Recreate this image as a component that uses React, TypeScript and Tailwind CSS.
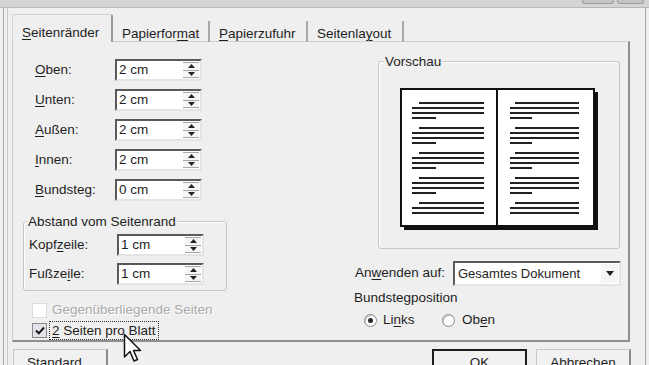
import React from "react"

const ink = "text-[#1e1e1e]"

function U({ children }: { children: React.ReactNode }) {
  return <span className="underline underline-offset-[2px] decoration-[1px]">{children}</span>
}

function Tri({ up }: { up?: boolean }) {
  return (
    <svg width="7" height="4" viewBox="0 0 7 4">
      <polygon points={up ? "3.5,0 7,4 0,4" : "0,0 7,0 3.5,4"} fill="#222" />
    </svg>
  )
}

function SpinField({ value }: { value: string }) {
  return (
    <div className="flex h-[22px] w-[87px] bg-white border-2 border-t-[#5a5a5a] border-l-[#5a5a5a] border-r-[#e4e4e4] border-b-[#e4e4e4]">
      <div className="flex-1 flex items-center pl-[2px] leading-none">{value}</div>
      <div className="w-[16px] mr-[1px] my-[1px] flex flex-col">
        <div className="flex-1 flex items-center justify-center bg-[#f6f6f6] border-t border-b border-[#a8a8a8]">
          <Tri up />
        </div>
        <div className="flex-1 flex items-center justify-center bg-[#f6f6f6] border-b border-[#a8a8a8]">
          <Tri />
        </div>
      </div>
    </div>
  )
}

function FieldRow({ label, value, labelW }: { label: React.ReactNode; value: string; labelW: string }) {
  return (
    <div className="flex items-center h-[22px]">
      <div className={labelW}>{label}</div>
      <SpinField value={value} />
    </div>
  )
}

function Radio({ checked }: { checked?: boolean }) {
  return (
    <div className="w-[13px] h-[13px] rounded-full border border-[#8a8a8a] bg-white flex items-center justify-center shadow-[inset_1px_1px_0_#c8c8c8]">
      {checked && <div className="w-[5px] h-[5px] rounded-full bg-[#2a2a2a]" />}
    </div>
  )
}

function Book() {
  const left = [15, 40, 65, 90, 115]
  const line = (x1: number, x2: number, y: number, k: string) => (
    <line key={k} x1={x1} x2={x2} y1={y} y2={y} stroke="#222" strokeWidth="2" />
  )
  return (
    <svg width="199" height="143" viewBox="0 0 199 143">
      <rect x="4" y="4" width="194" height="138" fill="#111" />
      <rect x="1" y="1" width="193" height="137" fill="#fff" stroke="#111" strokeWidth="2" />
      <line x1="97" y1="1" x2="97" y2="138" stroke="#111" strokeWidth="2" />
      {left.map((y, i) => (
        <g key={i}>
          {line(19, 84, y, "a")}
          {line(12, 84, y + 5, "b")}
          {line(12, 84, y + 10, "c")}
          {i < 4 && line(12, 36, y + 15, "d")}
          {line(115, 179, y, "e")}
          {line(110, 179, y + 5, "f")}
          {line(110, 179, y + 10, "g")}
          {i < 4 && line(110, 132, y + 15, "h")}
        </g>
      ))}
    </svg>
  )
}

function Cursor() {
  return (
    <svg className="absolute left-[123px] top-[333px]" width="20" height="32" viewBox="0 0 20 32">
      <path d="M1.5 1.5 L1.5 24 L7 18.5 L11 28 L14.5 26.5 L10.5 17.5 L17.5 17.5 Z" fill="#fff" stroke="#111" strokeWidth="1.5" strokeLinejoin="round" />
    </svg>
  )
}

export default function App() {
  return (
    <div className={`relative w-[649px] h-[365px] overflow-hidden bg-[#efefef] font-['Liberation_Sans',Arial,sans-serif] text-[13.5px] ${ink}`}>
      {/* title bar remnant */}
      <div className="h-[8px] bg-[#d4d4d4] border-b border-[#b8b8b8] flex justify-end gap-[3px] pr-[5px]">
        <div className="w-[32px] h-[4px] bg-[#c4c4c4] border border-t-0 border-[#9c9c9c] rounded-b-[3px]" />
        <div className="w-[27px] h-[4px] bg-[#c4c4c4] border border-t-0 border-[#9c9c9c] rounded-b-[3px]" />
      </div>

      <div className="mx-[3px] h-[357px] border-x border-[#a9a9a9]">
        <div className="ml-[3px] h-full border-l border-[#c9c9c9] pt-[6px]">
          {/* tabs */}
          <div className="flex items-end h-[28px] ml-[4px] relative z-10">
            <div className="w-[101px] h-[28px] bg-[#efefef] border-t border-l border-[#d2d2d2] border-r-2 border-r-[#9a9a9a] rounded-t-[2px] pl-[9px] pt-[11px] leading-none">
              <U>S</U>eitenränder
            </div>
            <div className="w-[97px] h-[21px] border-r-2 border-[#a8a8a8] pl-[9px] pt-[6px] leading-none">
              Papierfor<U>m</U>at
            </div>
            <div className="w-[98px] h-[21px] border-r-2 border-[#a8a8a8] pl-[9px] pt-[6px] leading-none">
              <U>P</U>apierzufuhr
            </div>
            <div className="w-[96px] h-[21px] border-r-2 border-[#a8a8a8] pl-[9px] pt-[6px] leading-none">
              Seitenla<U>y</U>out
            </div>
          </div>

          {/* panel */}
          <div className="ml-[4px] -mt-px w-[618px] h-[301px] border-t border-l border-[#cdcdcd] border-r-2 border-b-2 border-r-[#8e8e8e] border-b-[#8e8e8e] flex">
            {/* left column */}
            <div className="w-[337px] pt-[17px]">
              <div className="ml-[22px] flex flex-col gap-[8px]">
                <FieldRow labelW="w-[80px]" label={<><U>O</U>ben:</>} value="2 cm" />
                <FieldRow labelW="w-[80px]" label={<><U>U</U>nten:</>} value="2 cm" />
                <FieldRow labelW="w-[80px]" label={<><U>A</U>ußen:</>} value="2 cm" />
                <FieldRow labelW="w-[80px]" label={<><U>I</U>nnen:</>} value="2 cm" />
                <FieldRow labelW="w-[80px]" label={<><U>B</U>undsteg:</>} value="0 cm" />
              </div>

              <div className="ml-[10px] mt-[20px] w-[204px] h-[70px] border border-[#c6c6c6] rounded-[3px] shadow-[inset_1px_1px_0_#fff]">
                <div className="-mt-[8px] ml-[3px] px-[1px] w-fit h-[15px] leading-[15px] bg-[#efefef]">Abstand vom Seitenrand</div>
                <div className="ml-[5px] mt-[5px] flex flex-col gap-[7px]">
                  <FieldRow labelW="w-[88px]" label={<>Kopf<U>z</U>eile:</>} value="1 cm" />
                  <FieldRow labelW="w-[88px]" label={<>Fußze<U>i</U>le:</>} value="1 cm" />
                </div>
              </div>

              <div className="ml-[19px] mt-[11px] flex items-center h-[16px] gap-[5px]">
                <div className="w-[15px] h-[15px] bg-white border border-[#dcdcdc]" />
                <span className="text-[#a9a9a9] [text-shadow:1px_1px_0_#fff]">Gegenüberliegende Seiten</span>
              </div>
              <div className="ml-[19px] mt-[3px] flex items-center h-[19px] gap-[2px]">
                <div className="w-[15px] h-[15px] bg-[#e2e4ea] border border-[#8a8a8a] flex items-center justify-center">
                  <svg width="10" height="9" viewBox="0 0 10 9">
                    <path d="M1 4.5 L3.8 7.3 L9 1.5" fill="none" stroke="#1a1a1a" strokeWidth="2" />
                  </svg>
                </div>
                <span className="border border-dotted border-[#333] px-[2px] h-[19px] leading-[17px]">
                  <U>2</U> Seiten pro Blatt
                </span>
              </div>
            </div>

            {/* right column */}
            <div className="flex-1 pt-[19px]">
              <div className="ml-[28px] w-[242px] h-[188px] border border-[#c6c6c6] rounded-[3px] shadow-[inset_1px_1px_0_#fff]">
                <div className="-mt-[8px] ml-[5px] px-[1px] w-fit h-[15px] leading-[15px] bg-[#efefef]">Vorschau</div>
                <div className="ml-[21px] mt-[19px]">
                  <Book />
                </div>
              </div>

              <div className="mt-[12px] ml-[5px] flex items-center h-[25px]">
                <div className="w-[98px]">An<U>w</U>enden auf:</div>
                <div className="w-[168px] h-[25px] bg-white border-2 border-t-[#5a5a5a] border-l-[#5a5a5a] border-r-[#e4e4e4] border-b-[#e4e4e4] flex items-center">
                  <div className="flex-1 pl-[3px] text-[13px]">Gesamtes Dokument</div>
                  <div className="w-[17px] h-[19px] mr-[1px] bg-[#f4f4f4] flex items-center justify-center">
                    <svg width="8" height="5" viewBox="0 0 8 5">
                      <polygon points="0,0 8,0 4,5" fill="#222" />
                    </svg>
                  </div>
                </div>
              </div>

              <div className="mt-[4px] ml-[4px] h-[15px] leading-[15px]">Bundstegposition</div>
              <div className="mt-[8px] ml-[14px] flex items-center h-[15px]">
                <Radio checked />
                <span className="ml-[6px] w-[59px]">Li<U>n</U>ks</span>
                <Radio />
                <span className="ml-[7px]">Ob<U>e</U>n</span>
              </div>
            </div>
          </div>

          {/* buttons */}
          <div className="flex mt-[7px]">
            <div className="ml-[5px] w-[95px] h-[24px] border border-[#c8c8c8] border-r-2 border-r-[#8a8a8a] bg-[#f1f1f1] flex justify-center pt-[6px] leading-none">
              Standard...
            </div>
            <div className="ml-[324px] w-[95px] h-[24px] border-2 border-[#1c1c1c] bg-[#f1f1f1] flex justify-center pt-[5px] leading-none">
              OK
            </div>
            <div className="ml-[9px] w-[95px] h-[24px] border border-[#c8c8c8] border-r-2 border-r-[#8a8a8a] bg-[#f1f1f1] flex justify-center pt-[6px] leading-none">
              Abbrechen
            </div>
          </div>
        </div>
      </div>

      <Cursor />
    </div>
  )
}
